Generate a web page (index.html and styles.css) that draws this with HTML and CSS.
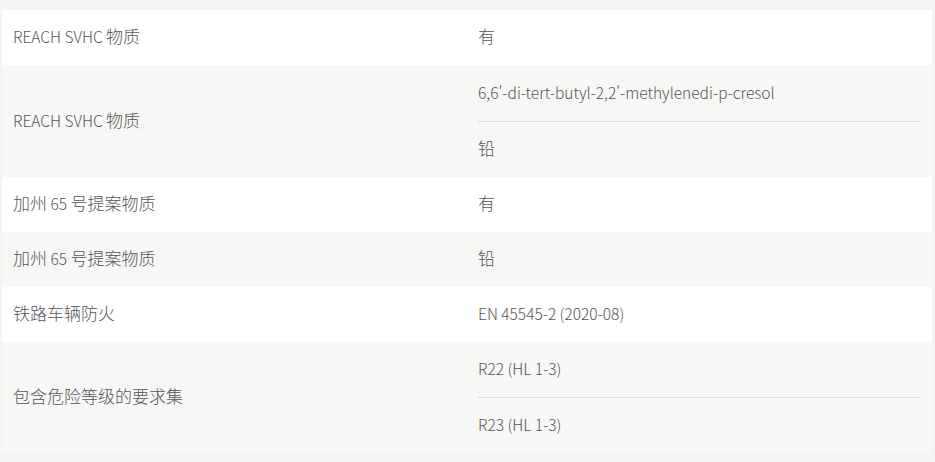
FILE: index.html
```html
<!DOCTYPE html>
<html lang="zh">
<head>
<meta charset="utf-8">
<link rel="stylesheet" href="styles.css">
</head>
<body>
<div class="spec">
  <div class="row">
    <div class="label">REACH SVHC <span class="cjk">物质</span></div>
    <div class="values"><div class="val"><span class="cjk">有</span></div></div>
  </div>
  <div class="row alt">
    <div class="label">REACH SVHC <span class="cjk">物质</span></div>
    <div class="values">
      <div class="val first-tall">6,6'-di-tert-butyl-2,2'-methylenedi-p-cresol</div>
      <div class="val"><span class="cjk">铅</span></div>
    </div>
  </div>
  <div class="row">
    <div class="label"><span class="cjk">加州</span>&nbsp;65&nbsp;<span class="cjk">号提案物质</span></div>
    <div class="values"><div class="val"><span class="cjk">有</span></div></div>
  </div>
  <div class="row alt">
    <div class="label"><span class="cjk">加州</span>&nbsp;65&nbsp;<span class="cjk">号提案物质</span></div>
    <div class="values"><div class="val"><span class="cjk">铅</span></div></div>
  </div>
  <div class="row">
    <div class="label"><span class="cjk">铁路车辆防火</span></div>
    <div class="values"><div class="val">EN 45545-2 (2020-08)</div></div>
  </div>
  <div class="row alt">
    <div class="label"><span class="cjk">包含危险等级的要求集</span></div>
    <div class="values">
      <div class="val">R22 (HL 1-3)</div>
      <div class="val">R23 (HL 1-3)</div>
    </div>
  </div>
</div>
</body>
</html>
```

FILE: styles.css
```css
html, body {
  margin: 0;
  padding: 0;
}
body {
  background: #f4f4f2;
  padding: 10px 3px 0 2px;
  font-family: "Noto Sans CJK SC", "Noto Sans", sans-serif;
  font-size: 15.5px;
  font-weight: 300;
  color: #555555;
}
.cjk {
  font-size: 17px;
  font-weight: 300;
  line-height: 20px;
}
.spec {
  display: flex;
  flex-direction: column;
}
.row {
  display: grid;
  grid-template-columns: 463px 1fr;
  background: #ffffff;
}
.row.alt {
  background: #f7f7f5;
}
.label {
  display: flex;
  align-items: center;
  white-space: pre;
  line-height: 20px;
  padding: 0 11px 3px;
}
.values {
  display: flex;
  flex-direction: column;
  padding: 0 11px 0 13px;
}
.val {
  height: 55px;
  box-sizing: border-box;
  padding-bottom: 3px;
  display: flex;
  align-items: center;
  line-height: 20px;
}
.val.first-tall {
  height: 56px;
}
.val + .val {
  border-top: 1px solid #dddddd;
  height: 56px;
}
```
